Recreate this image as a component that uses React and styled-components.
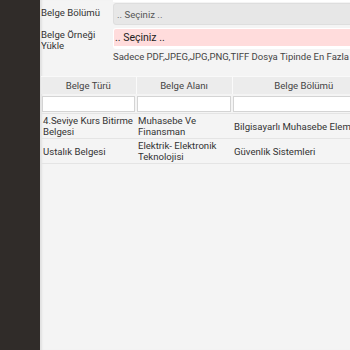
import React from "react";
import styled, { createGlobalStyle } from "styled-components";

const Global = createGlobalStyle`
  html, body { margin: 0; padding: 0; background: #f4f4f4; }
  body { font-family: Roboto, "Noto Sans", sans-serif; overflow: hidden; }
`;

const Layout = styled.div`
  display: flex;
  width: 350px;
  height: 350px;
  overflow: hidden;
`;

const Sidebar = styled.div`
  width: 40px;
  flex: none;
  background: #302c29;
`;

const Main = styled.div`
  flex: 1;
  min-width: 0;
  background: #f4f4f4;
  border-left: 1px solid #e2e2e2;
  box-shadow: inset 2px 0 2px -1px rgba(0,0,0,0.08);
  overflow: hidden;
`;

const FormRow = styled.div`
  display: flex;
  align-items: flex-start;
  margin-top: ${(p) => p.$mt || 0}px;
`;

const Label = styled.div`
  width: 72px;
  flex: none;
  font-size: 9.6px;
  line-height: 11px;
  color: #333;
  padding-top: ${(p) => p.$pt || 0}px;
`;

const Field = styled.div`
  flex: 1;
  min-width: 0;
  display: flex;
  flex-direction: column;
`;

const ClippedInput = styled.div`
  height: 2px;
  background: #fff;
  margin-left: 72px;
`;

const Select = styled.div`
  display: flex;
  align-items: center;
  box-sizing: border-box;
  width: 260px;
  height: ${(p) => (p.$error ? 21 : 22)}px;
  border-radius: 3px;
  white-space: nowrap;
  background: ${(p) => (p.$error ? "#ffdcdc" : "#e7e7e7")};
  border: ${(p) => (p.$error ? "1px solid #fff" : "1px solid #dedede")};
  border-bottom-width: ${(p) => (p.$error ? 3 : 1)}px;
  color: ${(p) => (p.$error ? "#222" : "#555")};
  font-size: ${(p) => (p.$error ? 10.5 : 9.6)}px;
  padding-left: ${(p) => (p.$error ? 1 : 3)}px;
`;

const Hint = styled.div`
  margin-top: 2px;
  font-size: 9.5px;
  line-height: 11px;
  color: #444;
  white-space: nowrap;
`;

const Table = styled.table`
  margin-top: 14px;
  width: 334px;
  border-collapse: collapse;
  table-layout: fixed;
  font-size: 9.6px;
  color: #333;
`;

const Th = styled.th`
  height: 17px;
  padding: 0;
  font-weight: normal;
  background: #ececec;
  border-left: 1px solid #fafafa;
  border-top: 1px solid #f9f9f9;
  text-align: center;
  color: #444;
  &:first-child { border-left: none; }
`;

const FilterCell = styled.td`
  padding: 2px 1px 1px;
  height: 15px;
  border-bottom: 1px solid #e4e4e4;
`;

const FilterInput = styled.div`
  box-sizing: border-box;
  height: 16px;
  background: #fff;
  border: 1px solid #d4d4d4;
`;

const Td = styled.td`
  padding: 0 2px;
  height: 24px;
  line-height: 11px;
  vertical-align: middle;
  border-bottom: 1px solid #e4e4e4;
  border-top: 1px solid #fbfbfb;
  white-space: ${(p) => (p.$nowrap ? "nowrap" : "normal")};
  overflow: hidden;
`;

const cols = ["Belge Türü", "Belge Alanı", "Belge Bölümü"];
const rows = [
  ["4.Seviye Kurs Bitirme Belgesi", "Muhasebe Ve Finansman", "Bilgisayarlı Muhasebe Elemanı"],
  ["Ustalık Belgesi", "Elektrik- Elektronik Teknolojisi", "Güvenlik Sistemleri"],
];

export default function App() {
  return (
    <>
      <Global />
      <Layout>
        <Sidebar />
        <Main>
          <ClippedInput />
          <FormRow $mt={1}>
            <Label $pt={4}>Belge Bölümü</Label>
            <Field>
              <Select>.. Seçiniz ..</Select>
            </Field>
          </FormRow>
          <FormRow $mt={3}>
            <Label $pt={1}>
              Belge Örneği
              <br />
              Yükle
            </Label>
            <Field>
              <Select $error>.. Seçiniz ..</Select>
              <Hint>Sadece PDF,JPEG,JPG,PNG,TIFF Dosya Tipinde En Fazla 512 KB</Hint>
            </Field>
          </FormRow>
          <Table>
            <colgroup>
              <col style={{ width: 95 }} />
              <col style={{ width: 96 }} />
              <col style={{ width: 143 }} />
            </colgroup>
            <thead>
              <tr>
                {cols.map((c) => (
                  <Th key={c}>{c}</Th>
                ))}
              </tr>
              <tr>
                {cols.map((c) => (
                  <FilterCell key={c}>
                    <FilterInput />
                  </FilterCell>
                ))}
              </tr>
            </thead>
            <tbody>
              {rows.map((r, i) => (
                <tr key={i}>
                  {r.map((c, j) => (
                    <Td key={j} $nowrap={j === 2}>
                      {c}
                    </Td>
                  ))}
                </tr>
              ))}
            </tbody>
          </Table>
        </Main>
      </Layout>
    </>
  );
}
